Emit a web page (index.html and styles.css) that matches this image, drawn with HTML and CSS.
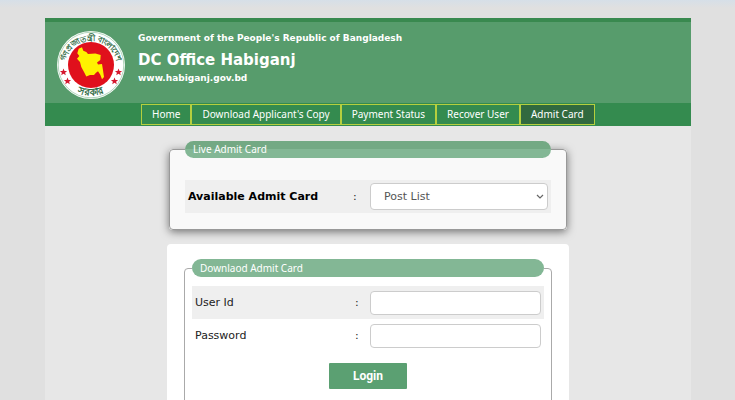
FILE: index.html
```html
<!DOCTYPE html>
<html lang="en">
<head>
    <meta charset="UTF-8">
    <meta name="viewport" content="width=device-width, initial-scale=1.0">
    <title>DC Office Habiganj</title>
    <link rel="stylesheet" href="styles.css">
</head>
<body>
    <div class="wrapper">
        <header class="header">
            <svg class="logo" viewBox="0 0 70 70" role="img" aria-label="Government seal">
                <defs>
                    <path id="arc-top" d="M9.500 42 A26 26 0 1 1 60.500 42"/>
                    <path id="arc-bottom" d="M12 56 A32 32 0 0 0 58 56"/>
                </defs>
                <circle cx="35" cy="35" r="34" fill="#fff"/>
                <circle cx="35" cy="35" r="32.800" fill="none" stroke="#7db88e" stroke-width=".6"/>
                <circle cx="35" cy="35" r="23" fill="#e0101c"/>
                <path fill="#fff200" d="M22.700 18.700 L26 17.300 L27.300 20.700 L30.300 22 L32 24 L39.300 23.500 L44.700 25 L44.300 30 L41 32.500 L42 34.500 L46 34 L47 40.300 L48 47 L46 49.300 L44.300 44.700 L42 41.300 L40 42.700 L38 45 L34 45 L30.300 46.500 L28 42 L25.300 37 L24 32 L21 28.700 L23.300 26 L21.300 23.300 Z"/>
                <g fill="#d4182e">
                    <path id="star" d="M7.500 38.500 L8.500 40.900 L11.100 41.100 L9.100 42.700 L9.800 45.300 L7.500 43.800 L5.200 45.300 L5.900 42.700 L3.900 41.100 L6.500 40.900 Z"/>
                    <use href="#star" x="4" y="9"/>
                    <use href="#star" x="55"/>
                    <use href="#star" x="51" y="9"/>
                </g>
                <g class="logo-text">
                    <text><textPath href="#arc-top" startOffset="50%">গণপ্রজাতন্ত্রী বাংলাদেশ</textPath></text>
                    <text class="logo-bottom"><textPath href="#arc-bottom" startOffset="50%">সরকার</textPath></text>
                </g>
            </svg>
            <div class="titles">
                <p>Government of the People's Republic of Bangladesh</p>
                <h1>DC Office Habiganj</h1>
                <p>www.habiganj.gov.bd</p>
            </div>
        </header>

        <nav class="menu">
            <a href="#">Home</a>
            <a href="#">Download Applicant's Copy</a>
            <a href="#">Payment Status</a>
            <a href="#">Recover User</a>
            <a href="#" class="active">Admit Card</a>
        </nav>

        <main class="content">
            <fieldset class="live">
                <legend>Live Admit Card</legend>
                <div class="row shade">
                    <label for="post" class="strong">Available Admit Card</label>
                    <span>:</span>
                    <select id="post">
                        <option>Post List</option>
                    </select>
                </div>
            </fieldset>

            <form class="card">
                <fieldset class="download">
                    <legend>Downlaod Admit Card</legend>
                    <div class="row shade">
                        <label for="user">User Id</label>
                        <span>:</span>
                        <input type="text" id="user">
                    </div>
                    <div class="row">
                        <label for="pass">Password</label>
                        <span>:</span>
                        <input type="password" id="pass">
                    </div>
                    <button type="button" class="login">Login</button>
                </fieldset>
            </form>
        </main>
    </div>
</body>
</html>
```
FILE: styles.css
```css
* {
    box-sizing: border-box;
}

html {
    height: 100%;
    overflow: hidden;
}

body {
    height: 100%;
    margin: 0;
    padding: 18px 44px 0 45px;
    overflow: hidden;
    background: linear-gradient(#d6dfe8, #e0e0e0 8px);
    font-family: "DejaVu Sans", Verdana, sans-serif;
    font-size: 11px;
    color: #222;
}

.wrapper {
    background: #e7e7e7;
}

/* Header */
.header {
    display: flex;
    align-items: flex-start;
    gap: 12px;
    padding: 8px 11px 3px;
    border-top: 4px solid #39894f;
    background: #579c6c;
    color: #fff;
}

.logo {
    width: 70px;
    height: 70px;
}

.logo-text {
    font-family: sans-serif;
    font-size: 8px;
    font-weight: bold;
    fill: #2f6b45;
    text-anchor: middle;
}

.logo-bottom {
    font-size: 10px;
}

.titles p,
.titles h1 {
    margin: 0;
    font-size: 9px;
    font-weight: bold;
    line-height: 16px;
}

.titles h1 {
    margin-top: 4px;
    font-size: 15px;
    line-height: 20px;
}

/* Menu */
.menu {
    display: flex;
    padding: 1px 95px 1px 96px;
    background: #348b4f;
}

.menu a {
    padding: 0 10px;
    border: 1px solid #b5cf3e;
    color: #fff;
    font-family: "Noto Sans", sans-serif;
    font-size: 10px;
    line-height: 19px;
    text-decoration: none;
    white-space: nowrap;
}

.menu .active {
    background: #31693f;
}

/* Forms */
.content {
    width: 402px;
    max-width: 100%;
    margin: 0 auto;
    padding-top: 15px;
}

fieldset {
    min-width: 0;
    margin: 0;
    border-radius: 4px;
}

legend {
    width: 100%;
    padding: 0 8px;
    border-radius: 9px;
    background: #83b795;
    color: #fff;
    font-family: "Noto Sans", sans-serif;
    font-size: 10px;
    line-height: 17px;
}

.live {
    margin: 0 2px;
    padding: 22px 15px 16px;
    border: 1px solid #999;
    background: #f9f9f9;
    box-shadow: 0 2px 8px rgba(0, 0, 0, 0.5);
}

.live legend {
    background: linear-gradient(#73a984 8px, #83b795 8px);
}

.row {
    display: grid;
    grid-template-columns: 160px 15px 1fr;
    align-items: center;
    min-height: 33px;
    padding: 3px;
}

.live .row {
    grid-template-columns: 165px 17px 1fr;
}

.shade {
    background: #efefef;
}

.strong {
    color: #000;
    font-weight: bold;
}

.row select,
.row input {
    width: 100%;
    height: 24px;
    border: 1px solid #ccc;
    border-radius: 4px;
    background: #fff;
    color: #555;
    font-family: inherit;
    font-size: 11px;
}

.row select {
    height: 27px;
    padding: 0 20px 0 13px;
    appearance: none;
    background: #fff url("data:image/svg+xml,%3Csvg xmlns='http://www.w3.org/2000/svg' width='8' height='5'%3E%3Cpath d='M1 1l3 3 3-3' fill='none' stroke='%23666' stroke-width='1.2'/%3E%3C/svg%3E") no-repeat right 3px center;
}

.card {
    margin-top: 14px;
    padding: 15px 17px 20px;
    border-radius: 4px;
    background: #fff;
}

.download {
    padding: 9px 7px 30px;
    border: 1px solid #aaa;
}

.download legend {
    line-height: 18px;
}

.login {
    display: block;
    margin: 11px auto 0;
    padding: 0 24px;
    border: 0;
    border-radius: 1px;
    background: #5ba072;
    color: #fff;
    font-family: Roboto, sans-serif;
    font-size: 12px;
    font-weight: bold;
    line-height: 26px;
}
```
